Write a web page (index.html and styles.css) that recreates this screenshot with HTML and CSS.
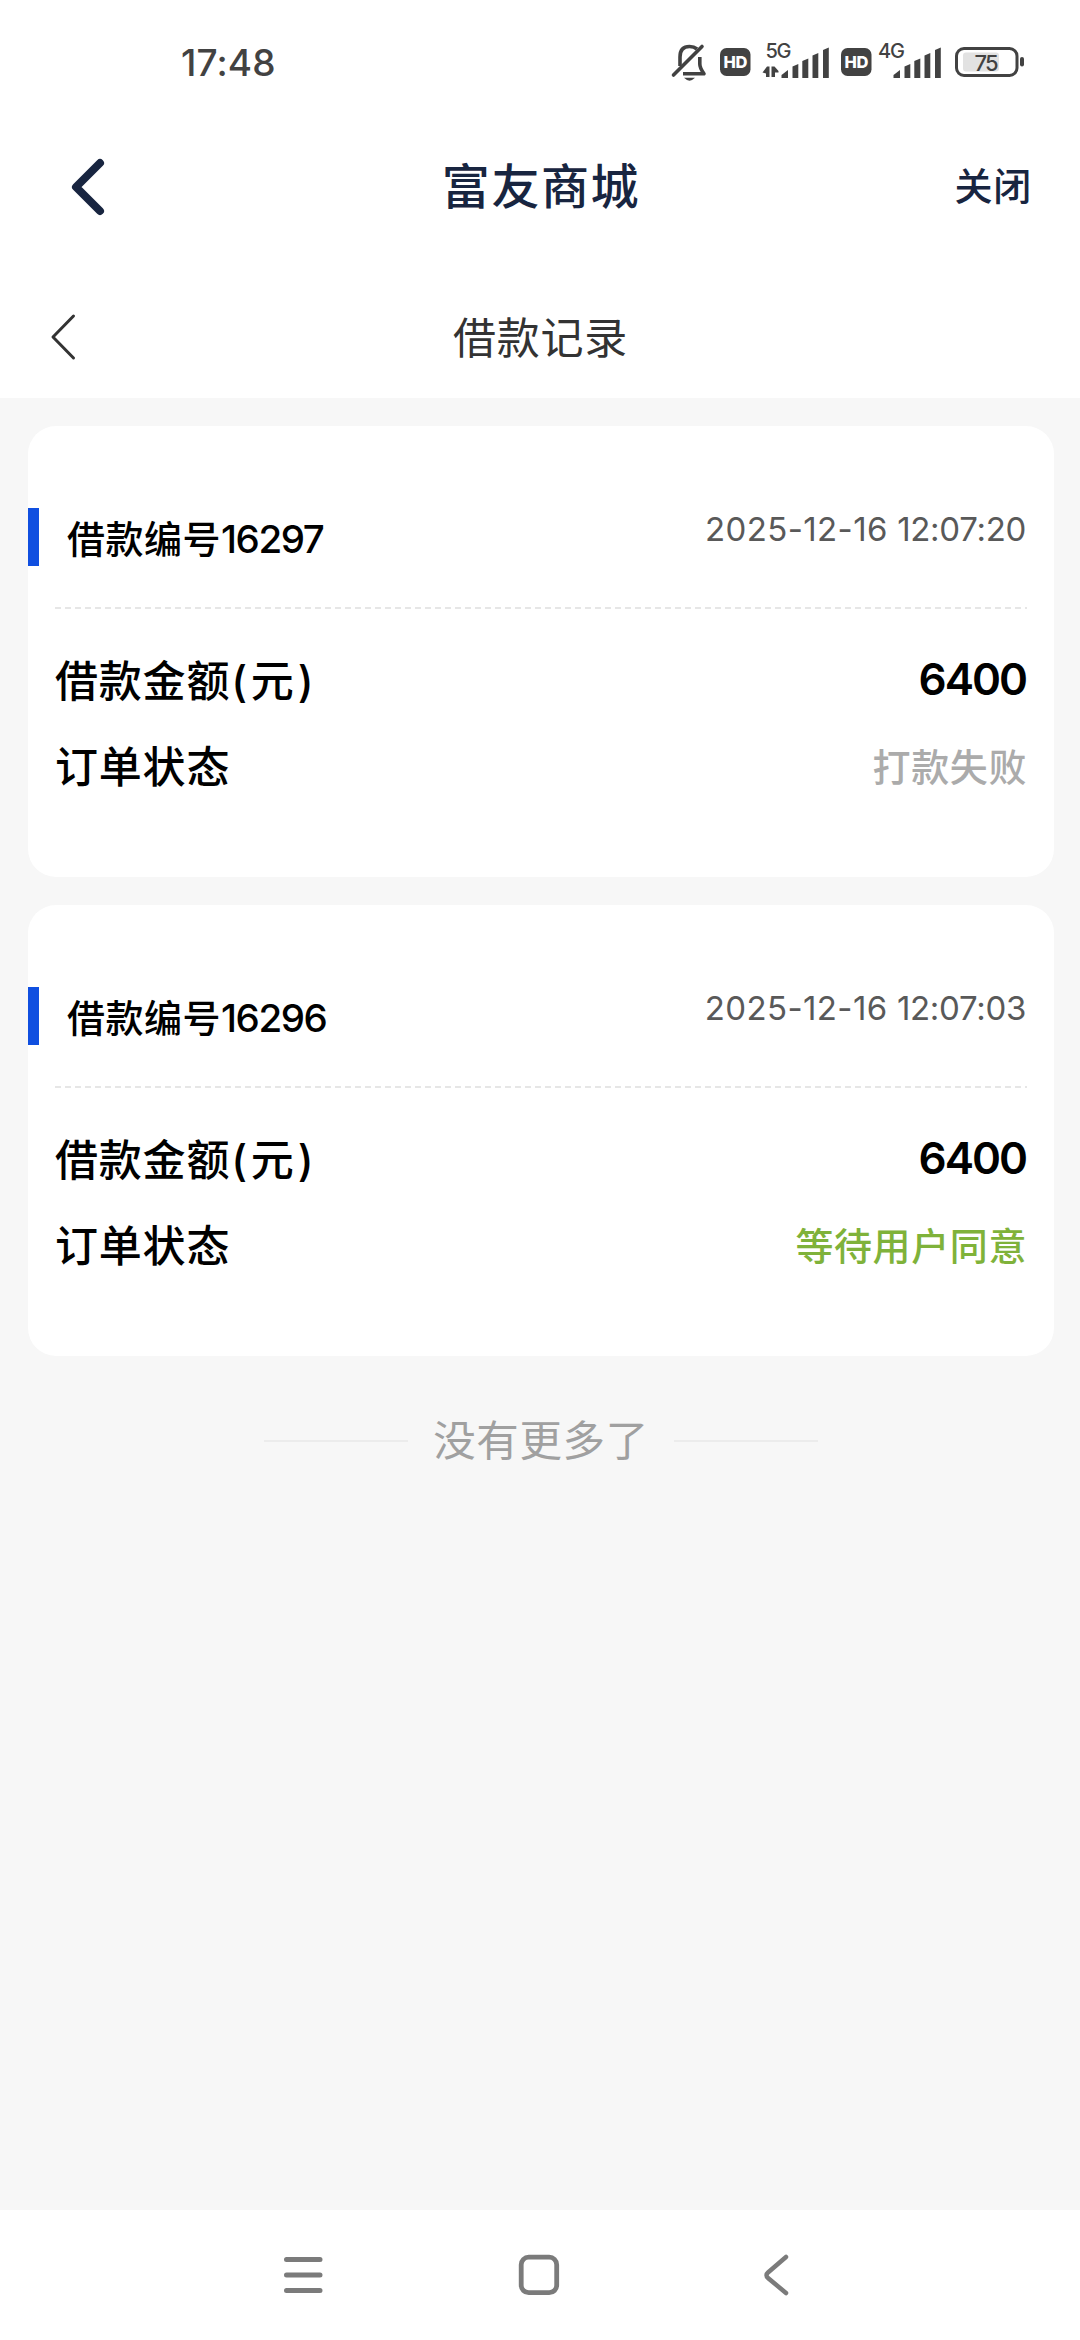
FILE: index.html
```html
<!DOCTYPE html>
<html lang="zh-CN">
<head>
<meta charset="utf-8">
<title>借款记录</title>
<link rel="stylesheet" href="styles.css">
</head>
<body>
<div class="screen">
  <div class="status-bar">
    <span class="clock">17:48</span>
    <svg class="status-icons" width="360" height="50" viewBox="668 36 360 50">
      <g fill="none" stroke="#424242" stroke-width="3.600">
        <path d="M680 66V57Q680 46.500 689.500 46.500Q694 46.500 697 49"/>
        <path d="M699.800 57V64Q699.800 68 704 73.700H683" stroke-linejoin="round"/>
        <path d="M673.500 75L702 46.500" stroke-linecap="round"/>
      </g>
      <path d="M684 77.800H695Q689.500 83.500 684 77.800Z" fill="#424242"/>
      <g fill="#424242">
        <rect x="720" y="48" width="30.500" height="28" rx="6.500"/>
        <rect x="841" y="48" width="30.500" height="28" rx="6.500"/>
        <path d="M762.500 72.500L767 66.500H769.500V77H766V73.500ZM771.500 66.500H774.500L778.500 71V72.500H775V77H771.500Z"/>
        <g id="bars">
          <path d="M781.500 78V75L788 70V78Z"/>
          <path d="M792.500 78V66.500L798.300 64V78Z"/>
          <path d="M802.300 78V61L808.300 58.500V78Z"/>
          <path d="M812.500 78V55.500L818.300 53V78Z"/>
          <path d="M823 78V50L828.800 47.500V78Z"/>
        </g>
        <use href="#bars" x="112"/>
        <rect x="1020" y="57" width="4" height="9.500" rx="2"/>
      </g>
      <rect x="963" y="52.500" width="36" height="19" rx="3" fill="#e2e2e2"/>
      <rect x="956.500" y="48.500" width="60.500" height="27" rx="7.500" fill="none" stroke="#424242" stroke-width="3"/>
      <g class="status-text">
        <text x="723.500" y="68" textLength="24" class="hd">HD</text>
        <text x="844.500" y="68" textLength="24" class="hd">HD</text>
        <text x="765.500" y="57.500" textLength="26" class="net">5G</text>
        <text x="878" y="57.500" textLength="27" class="net">4G</text>
        <text x="974.500" y="70.500" textLength="24" class="level">75</text>
      </g>
    </svg>
  </div>

  <header class="app-bar">
    <svg class="app-back" width="36" height="60" viewBox="0 0 36 60"><path d="M31 6L7 30L31 54" fill="none" stroke="#182540" stroke-width="8" stroke-linecap="round" stroke-linejoin="round"/></svg>
    <h1 class="app-title">富友商城</h1>
    <span class="app-close">关闭</span>
  </header>

  <div class="page-bar">
    <svg class="page-back" width="28" height="48" viewBox="0 0 28 48"><path d="M24.500 3L4 24L24.500 45" fill="none" stroke="#333" stroke-width="3" stroke-linecap="round" stroke-linejoin="round"/></svg>
    <h2 class="page-title">借款记录</h2>
    <span></span>
  </div>

  <main class="records">
    <section class="card">
      <div class="card-head">
        <span class="loan-id">借款编号<span class="num">16297</span></span>
        <span class="date"><span class="day">2025-12-16</span> <span class="time">12:07:20</span></span>
      </div>
      <svg class="divider" width="972" height="2"><path d="M0 1H972" stroke="#e6e6e6" stroke-width="2" stroke-dasharray="6 4"/></svg>
      <div class="row"><span>借款金额<span class="open">(</span>元<span class="close">)</span></span><span class="amount">6400</span></div>
      <div class="row"><span>订单状态</span><span class="state failed">打款失败</span></div>
    </section>
    <section class="card">
      <div class="card-head">
        <span class="loan-id">借款编号<span class="num">16296</span></span>
        <span class="date"><span class="day">2025-12-16</span> <span class="time">12:07:03</span></span>
      </div>
      <svg class="divider" width="972" height="2"><path d="M0 1H972" stroke="#e6e6e6" stroke-width="2" stroke-dasharray="6 4"/></svg>
      <div class="row"><span>借款金额<span class="open">(</span>元<span class="close">)</span></span><span class="amount">6400</span></div>
      <div class="row"><span>订单状态</span><span class="state waiting">等待用户同意</span></div>
    </section>
    <div class="no-more">没有更多了</div>
  </main>

  <nav class="nav-bar">
    <svg width="40" height="44" viewBox="0 0 40 44"><path d="M3.500 6.500H37M3.500 22H37M3.500 37.500H37" stroke="#7b7b7b" stroke-width="5" stroke-linecap="round"/></svg>
    <svg width="44" height="44" viewBox="0 0 44 44"><rect x="4.200" y="4.200" width="35.500" height="35.500" rx="7.500" fill="none" stroke="#7b7b7b" stroke-width="4.800"/></svg>
    <svg width="36" height="44" viewBox="-8 0 36 44"><path d="M23 4L5 19.500Q2 22 5 25L23 40" fill="none" stroke="#7b7b7b" stroke-width="4.500" stroke-linecap="round"/></svg>
  </nav>
</div>
</body>
</html>
```
FILE: styles.css
```css
* { box-sizing: border-box; }
body { margin: 0; font-family: Inter, "Noto Sans CJK SC", sans-serif; background: #fff; color: #000; }
h1, h2 { margin: 0; }
svg { display: block; flex: none; }
.screen { width: 1080px; height: 2340px; display: flex; flex-direction: column; overflow: hidden; }

.status-bar { height: 124px; display: flex; justify-content: space-between; align-items: flex-start; padding: 36px 52px 0 181px; }
.clock { font-size: 37px; line-height: 54px; font-weight: 500; color: #424242; letter-spacing: 0.1px; }
.status-text { font-family: Inter, sans-serif; fill: #424242; }
.status-text .hd { font-size: 16.5px; font-weight: 800; fill: #fff; }
.status-text .net { font-size: 20px; font-weight: 500; }
.status-text .level { font-size: 22px; font-weight: 500; }

.app-bar { height: 126px; display: grid; grid-template-columns: 1fr auto 1fr; align-items: center; padding: 0 48px 0 69px; color: #182540; }
.app-back { margin-right: -20px; }
.app-title { margin-left: -19px; font-size: 48px; line-height: 60px; font-weight: 500; letter-spacing: 1.6px; }
.app-close { justify-self: end; margin-top: -2px; font-size: 38px; line-height: 50px; font-weight: 500; letter-spacing: 0.8px; }

.page-bar { height: 148px; display: grid; grid-template-columns: 1fr auto 1fr; align-items: center; padding: 26px 48px 0 49px; color: #333; }
.page-title { font-size: 43px; line-height: 60px; font-weight: 400; letter-spacing: 0.8px; padding-top: 1px; }

.records { flex: 1; min-height: 0; background: #f7f7f7; padding: 28px 26px 0 28px; }
.card { height: 451px; margin-bottom: 28px; background: #fff; border-radius: 28px; padding: 82px 27px 0; }
.card-head { display: flex; justify-content: space-between; align-items: flex-start; margin-left: -27px; height: 99px; padding-right: 1px; }
.loan-id { border-left: 11px solid #104fe0; height: 58px; line-height: 62px; padding-left: 28px; font-size: 38px; font-weight: 500; letter-spacing: 0.5px; white-space: nowrap; }
.num { font-size: 38.5px; letter-spacing: -1.4px; }
.date { font-size: 33px; line-height: 42px; color: #595959; white-space: nowrap; }
.day { letter-spacing: 0.4px; }
.time { letter-spacing: -0.3px; }
.row { display: flex; justify-content: space-between; align-items: center; height: 86px; padding-right: 1px; font-size: 43px; font-weight: 500; letter-spacing: 0.8px; }
.divider + .row { margin-top: 26px; }
.open { margin: 0 3px 0 1px; }
.close { margin-left: 3px; }
.amount { font-size: 44px; letter-spacing: -2px; font-weight: 600; padding-top: 2px; }
.state { font-size: 38px; letter-spacing: 0.6px; margin-right: -1px; }
.failed { color: #ababab; }
.waiting { color: #7fb23a; }
.no-more { display: flex; align-items: center; justify-content: center; gap: 25px; height: 60px; margin-top: 55px; font-size: 42.5px; line-height: 56px; letter-spacing: 0.6px; color: #a0a0a0; padding-bottom: 1px; }
.no-more::before, .no-more::after { content: ""; width: 144px; height: 2px; background: #ececec; }

.nav-bar { height: 130px; display: flex; justify-content: space-between; align-items: center; padding: 0 289px 0 283px; }
```
